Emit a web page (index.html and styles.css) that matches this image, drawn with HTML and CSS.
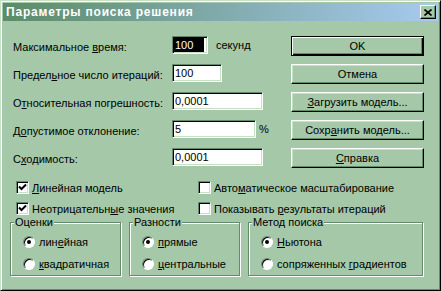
FILE: index.html
```html
<!DOCTYPE html>
<html lang="ru">
<head>
  <meta charset="UTF-8">
  <title>Параметры поиска решения</title>
  <link rel="stylesheet" href="styles.css">
</head>
<body>
<div class="window">
  <div class="titlebar">
    <span class="title">Параметры поиска решения</span>
    <button class="close-btn" aria-label="Закрыть">
      <svg width="8" height="7" viewBox="0 0 8 7"><path d="M0.5 0.5L7.5 6.5M7.5 0.5L0.5 6.5" stroke="#000" stroke-width="1.6"/></svg>
    </button>
  </div>
  <div class="content">
    <div class="top">
      <div class="fields">
        <div class="row"><label>Максимальное <u>в</u>ремя:</label><div class="cell"><input class="field w-time sel" value="100"><span class="unit">секунд</span></div></div>
        <div class="row"><label>Предел<u>ь</u>ное число итераций:</label><div class="cell"><input class="field w-iter" value="100"></div></div>
        <div class="row"><label>О<u>т</u>носительная погрешность:</label><div class="cell"><input class="field w-wide" value="0,0001"></div></div>
        <div class="row"><label>Д<u>о</u>пустимое отклонение:</label><div class="cell"><input class="field w-dev" value="5"><span class="unit pct">%</span></div></div>
        <div class="row"><label>С<u>х</u>одимость:</label><div class="cell"><input class="field w-wide" value="0,0001"></div></div>
      </div>
      <div class="actions">
        <button class="btn default">OK</button>
        <button class="btn">Отмена</button>
        <button class="btn"><u>З</u>агрузить модель...</button>
        <button class="btn">Сохр<u>а</u>нить модель...</button>
        <button class="btn"><u>С</u>правка</button>
      </div>
    </div>

    <div class="checks">
      <div class="check"><span class="box on"><svg width="9" height="9" viewBox="0 0 9 9"><path d="M1 3.5L3.5 6L8 1.5" fill="none" stroke="#000" stroke-width="2"/></svg></span><span><u>Л</u>инейная модель</span></div>
      <div class="check"><span class="box"></span><span>Авто<u>м</u>атическое масштабирование</span></div>
      <div class="check"><span class="box on"><svg width="9" height="9" viewBox="0 0 9 9"><path d="M1 3.5L3.5 6L8 1.5" fill="none" stroke="#000" stroke-width="2"/></svg></span><span>Неотрицательн<u>ы</u>е значения</span></div>
      <div class="check"><span class="box"></span><span>Показывать <u>р</u>езультаты итераций</span></div>
    </div>

    <div class="groups">
      <fieldset class="group g-small">
        <legend>Оценки</legend>
        <div class="opt"><span class="radio on"></span><span>лин<u>е</u>йная</span></div>
        <div class="opt"><span class="radio"></span><span><u>к</u>вадратичная</span></div>
      </fieldset>
      <fieldset class="group g-small">
        <legend>Разности</legend>
        <div class="opt"><span class="radio on"></span><span><u>п</u>рямые</span></div>
        <div class="opt"><span class="radio"></span><span><u>ц</u>ентральные</span></div>
      </fieldset>
      <fieldset class="group g-wide">
        <legend>Метод поиска</legend>
        <div class="opt"><span class="radio on"></span><span><u>Н</u>ьютона</span></div>
        <div class="opt"><span class="radio"></span><span>сопряженных <u>г</u>радиентов</span></div>
      </fieldset>
    </div>
  </div>
</div>
</body>
</html>
```

FILE: styles.css
```css
body{
  margin: 0;
  font-family: "Liberation Sans", Arial, sans-serif;
  font-size: 11px;
  color: #000;
}
.window{
  width: 441px;
  height: 291px;
  box-sizing: border-box;
  border: 1px solid;
  border-color: #c8e0c8 #000 #000 #c8e0c8;
  box-shadow: inset 1px 1px #fff, inset -1px -1px #668a6c;
  padding: 2px;
  background-color: #a4c8a8;
}
.titlebar{
  height: 18px;
  display: flex;
  align-items: center;
  justify-content: space-between;
  padding: 0 2px 0 3px;
  background: linear-gradient(to right, #5a8c68, #a6caf0);
}
.title{
  color: #fff;
  font-weight: bold;
  font-size: 12px;
  letter-spacing: 0.8px;
}
.close-btn{
  width: 16px;
  height: 14px;
  padding: 0;
  display: flex;
  align-items: center;
  justify-content: center;
  border: 1px solid;
  border-color: #fff #000 #000 #fff;
  box-shadow: inset -1px -1px #668a6c;
  background-color: #a4c8a8;
}
.content{
  padding: 15px 14px 0 7px;
}
.top{
  display: flex;
  justify-content: space-between;
}
.fields{
  display: flex;
  flex-direction: column;
  gap: 8px;
  padding-left: 3px;
}
.row{
  display: grid;
  grid-template-columns: 159px auto;
  align-items: center;
  height: 20px;
}
.cell{
  display: flex;
  align-items: center;
  margin-bottom: 4px;
}
.field{
  height: 18px;
  box-sizing: border-box;
  border: 1px solid;
  border-color: #668a6c #fff #fff #668a6c;
  box-shadow: inset 1px 1px #000, inset -1px -1px #c8e0c8;
  background-color: #fff;
  padding: 0 2px;
  font: inherit;
  color: #000;
  outline: none;
}
.field.sel{
  background-color: #000;
  color: #fff;
  box-shadow: inset 1px 1px #000, inset -1px -1px #c8e0c8, inset -3px 0 #fff;
}
.w-time{ width: 36px; }
.w-iter{ width: 50px; }
.w-dev{ width: 84px; }
.w-wide{ width: 91px; }
.unit{
  margin-left: 8px;
}
.unit.pct{
  margin-left: 3px;
}
.actions{
  display: flex;
  flex-direction: column;
  gap: 8px;
}
.btn{
  width: 133px;
  height: 20px;
  padding: 0;
  border: 1px solid;
  border-color: #fff #000 #000 #fff;
  box-shadow: inset -1px -1px #668a6c, inset 1px 1px #c8e0c8;
  background-color: #a4c8a8;
  font: inherit;
  color: #000;
}
.btn.default{
  border-color: #000;
  box-shadow: inset 1px 1px #fff, inset -1px -1px #000, inset -2px -2px #668a6c;
}
.checks{
  display: grid;
  grid-template-columns: 182px auto;
  grid-auto-rows: 21px;
  margin-top: 9px;
  padding-left: 6px;
}
.check{
  display: flex;
  align-items: center;
  gap: 3px;
}
.box{
  width: 13px;
  height: 13px;
  box-sizing: border-box;
  border: 1px solid;
  border-color: #668a6c #fff #fff #668a6c;
  box-shadow: inset 1px 1px #000, inset -1px -1px #c8e0c8;
  background-color: #fff;
  display: flex;
  align-items: center;
  justify-content: center;
}
.groups{
  display: flex;
  gap: 8px;
  margin-top: -3px;
}
.group{
  margin: 0;
  padding: 2px 0 0 3px;
  height: 60px;
  box-sizing: border-box;
  border: 1px solid #668a6c;
  box-shadow: inset 1px 1px #fff, 1px 1px #fff;
}
.g-small{ width: 111px; }
.g-wide{ width: 175px; }
.group legend{
  padding: 0 1px;
  line-height: 13px;
  background-color: #a4c8a8;
}
.opt{
  display: flex;
  align-items: center;
  gap: 4px;
  height: 22px;
  padding-left: 9px;
}
.radio{
  width: 12px;
  height: 12px;
  box-sizing: border-box;
  border-radius: 50%;
  border: 1px solid;
  border-color: #668a6c #fff #fff #668a6c;
  box-shadow: inset 1px 1px #000;
  background-color: #fff;
  display: flex;
  align-items: center;
  justify-content: center;
}
.radio.on::after{
  content: "";
  width: 4px;
  height: 4px;
  border-radius: 50%;
  background-color: #000;
}
```
